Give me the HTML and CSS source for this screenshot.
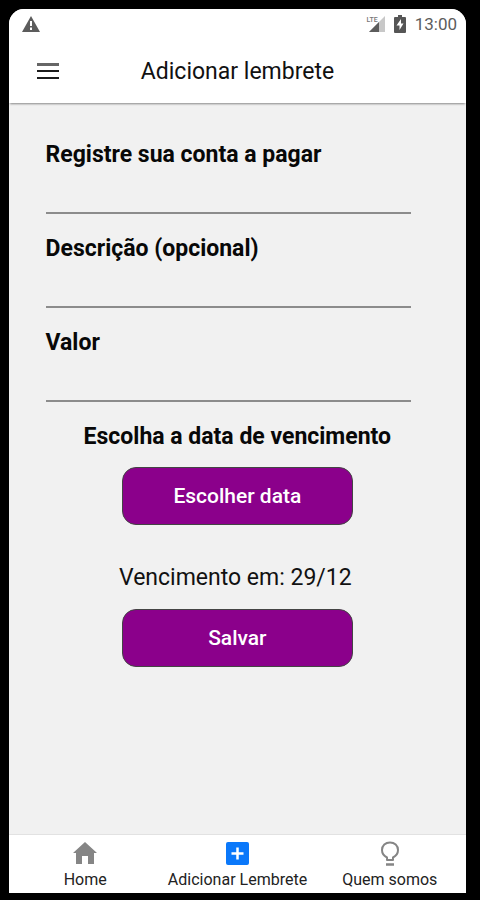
FILE: index.html
```html
<!DOCTYPE html>
<html lang="pt-BR">
<head>
<meta charset="utf-8">
<meta name="viewport" content="width=device-width, initial-scale=1">
<title>Adicionar lembrete</title>
<link rel="stylesheet" href="styles.css">
</head>
<body>
<div class="phone">
  <div class="status">
    <svg width="18" height="16" viewBox="0 0 18 16"><path d="M9 0L18 16H0Z" fill="#5c5c5c"/><path d="M9 5v5M9 11.500v2.500" stroke="#fff" stroke-width="2"/></svg>
    <div class="status-right">
      <div class="signal">
        <span class="lte">LTE</span>
        <svg width="16" height="16" viewBox="0 0 16 16"><path d="M16 0V16H0Z" fill="#c8c8c8"/><path d="M10 6V16H0Z" fill="#5c5c5c"/></svg>
      </div>
      <svg width="12" height="18" viewBox="0 0 12 18"><path d="M4 0h4v2h3q1 0 1 1v14q0 1-1 1H1q-1 0-1-1V3q0-1 1-1h3Z" fill="#555"/><path d="M7 4L2.500 10.500H5.500V15L9.500 8.500H7Z" fill="#fff"/></svg>
      <span class="clock">13:00</span>
    </div>
  </div>
  <header class="header">
    <button class="menu" type="button" aria-label="Menu">
      <svg width="22" height="17" viewBox="0 0 22 17"><path d="M0 1.500H22" stroke="#666" stroke-width="3"/><path d="M0 8H22M0 15H22" stroke="#1c1c1c" stroke-width="2"/></svg>
    </button>
    <h1 class="title">Adicionar lembrete</h1>
  </header>
  <main class="content">
    <form class="form">
      <div class="field"><label for="conta">Registre sua conta a pagar</label><input id="conta" type="text"></div>
      <div class="field"><label for="descricao">Descrição (opcional)</label><input id="descricao" type="text"></div>
      <div class="field"><label for="valor">Valor</label><input id="valor" type="text"></div>
      <h2 class="subtitle">Escolha a data de vencimento</h2>
      <button class="action" type="button">Escolher data</button>
      <p class="due">Vencimento em: 29/12</p>
      <button class="action" type="button">Salvar</button>
    </form>
  </main>
  <nav class="tabs">
    <a class="tab" href="#home">
      <svg width="26" height="24" viewBox="0 0 26 24"><path d="M13 1L1 12H4V23H10V15H16V23H22V12H25Z" fill="#858585"/></svg>
      <span>Home</span>
    </a>
    <a class="tab" href="#adicionar" aria-current="page">
      <svg width="24" height="24" viewBox="0 0 24 24"><rect x="1" y="1" width="23" height="23" rx="2" fill="#0a78fa"/><path d="M12.500 6.500V18.500M6.500 12.500H18.500" stroke="#fff" stroke-width="2.500"/></svg>
      <span>Adicionar Lembrete</span>
    </a>
    <a class="tab" href="#quem-somos">
      <svg width="24" height="26" viewBox="0 0 24 26"><path d="M9 19V16.500C6 15 4 12.500 4 9C4 4.500 7.500 1.500 12 1.500S20 4.500 20 9C20 12.500 18 15 15 16.500V19Z" fill="none" stroke="#858585" stroke-width="2" stroke-linejoin="round"/><path d="M8 23.500H16" stroke="#858585" stroke-width="2.500"/></svg>
      <span>Quem somos</span>
    </a>
  </nav>
</div>
</body>
</html>
```
FILE: styles.css
```css
* { box-sizing: border-box; }

body {
  display: flex;
  min-height: 100vh;
  margin: 0;
  padding: 9px 14px 7px 9px;
  background: #000;
  color: #111;
  font-family: Roboto, "Liberation Sans", sans-serif;
}

h1, h2, p { margin: 0; }
svg { display: block; flex: none; }
button { font: inherit; cursor: pointer; }

.phone {
  display: flex;
  flex: 1;
  flex-direction: column;
  overflow: hidden;
  border-radius: 15px 15px 0 0;
  background: #f1f1f1;
}

.status {
  display: flex;
  justify-content: space-between;
  align-items: center;
  height: 30px;
  padding: 0 9px 0 13px;
  background: #fff;
}

.status-right { display: flex; align-items: center; gap: 9px; }
.signal { display: flex; align-items: center; }
.lte { align-self: flex-start; margin-right: -9px; color: #777; font-size: 7px; font-weight: 500; line-height: 8px; }
.clock { color: #5c5c5c; font-size: 17px; line-height: 20px; }

.header {
  display: grid;
  grid-template-columns: 80px 1fr 80px;
  align-items: center;
  height: 64px;
  background: #fff;
  box-shadow: 0 2px 2px -1px #888;
}

.menu { justify-self: start; margin-left: 28px; padding: 0; border: 0; background: none; }
.title { padding-top: 2px; font-size: 23px; font-weight: 400; line-height: 28px; text-align: center; }

.content { flex: 1; padding: 38px 0; }

.form {
  display: flex;
  flex-direction: column;
  align-items: center;
  width: 80%;
  margin-left: 8%;
}

.field { display: flex; flex-direction: column; width: 100%; margin-bottom: 21px; }
.field label, .subtitle { color: #080808; font-size: 23px; font-weight: 700; line-height: 28px; }

.field input {
  width: 100%;
  height: 45px;
  padding: 8px 0;
  border: 0;
  border-bottom: 2px solid #8c8c8c;
  border-radius: 0;
  outline: 0;
  background: transparent;
  font: inherit;
  font-size: 20px;
}

.subtitle { margin: 0 -18px 16px 0; }

.action {
  width: 63%;
  height: 58px;
  margin-left: 18px;
  border: 1px solid #444;
  border-radius: 14px;
  background: #8b008b;
  color: #fff;
  font-size: 21px;
  font-weight: 500;
}

.due { margin: 39px 0 17px 14px; font-size: 23px; line-height: 28px; }

.tabs {
  display: grid;
  grid-template-columns: repeat(3, 1fr);
  height: 59px;
  border-top: 1px solid #e2e2e2;
  background: #fff;
}

.tab {
  display: flex;
  flex-direction: column;
  align-items: center;
  justify-content: space-between;
  padding: 6px 0 3px;
  color: #222;
  font-size: 16px;
  line-height: 20px;
  text-decoration: none;
  white-space: nowrap;
}
```
